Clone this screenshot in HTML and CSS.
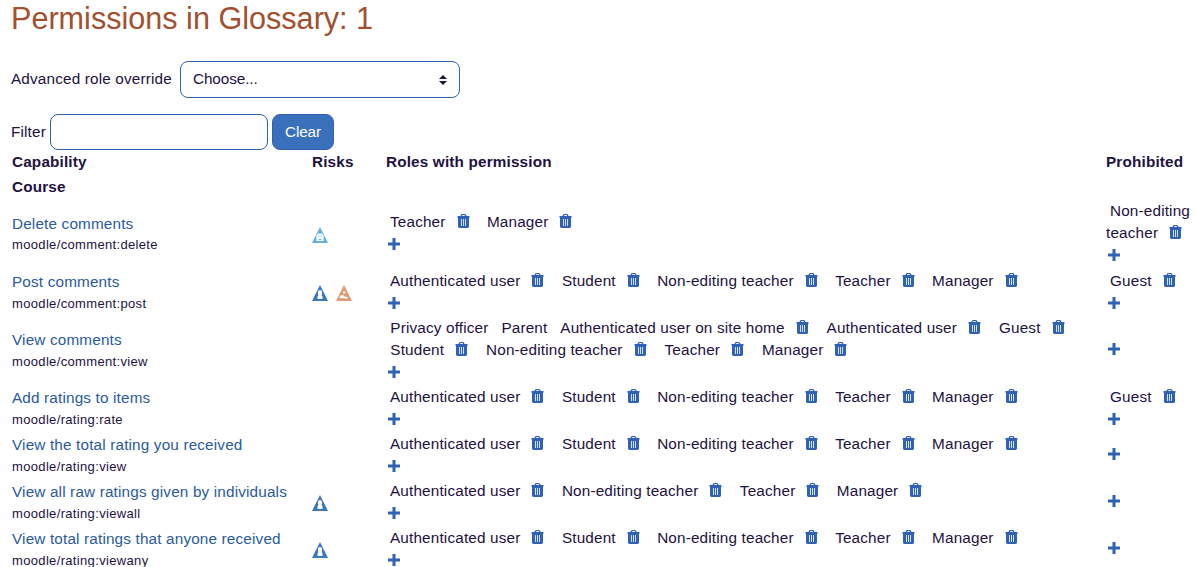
FILE: index.html
```
<!DOCTYPE html>
<html lang="en">
<head>
<meta charset="utf-8">
<title>Permissions in Glossary: 1</title>
<link rel="stylesheet" href="styles.css">
</head>
<body>
<svg class="sprite" width="0" height="0" aria-hidden="true">
  <symbol id="trash" viewBox="0 0 13 14"><path fill="currentColor" fill-rule="evenodd" d="M3.400 2 4.200.6Q4.400 0 5.200 0h2.600q.8 0 1 .6L9.600 2H12.500v1.800h-.5V12.600q0 1.400-1.400 1.400H2.400Q1 14 1 12.600V3.800H.5V2zM5 2h3L7.500 1.100h-2z"/><path stroke="#cfe0ee" d="M4.500 5v7M6.500 5v7M8.500 5v7"/></symbol>
  <symbol id="plus" viewBox="0 0 12 12"><path fill="currentColor" d="M4.500 0h3v4.500H12v3H7.500V12h-3V7.500H0v-3h4.500z"/></symbol>
  <symbol id="privacy" viewBox="0 0 16 16"><path fill="#3a76c2" d="M8 0l8 16H0z"/><path fill="#fff" d="M8 5c1.400 0 2.100 1.100 2.100 2.500 0 1.200-.3 2-.6 2.500L10.500 11.500V14h-5v-2.500L6.500 10c-.3-.5-.6-1.300-.6-2.500C5.900 6.100 6.600 5 8 5z"/></symbol>
  <symbol id="dataloss" viewBox="0 0 16 16"><path fill="#6aaee8" d="M8 0l8 16H0z"/><path fill="#fff" d="M4.500 8h1V6.500h5V8h1v6h-7z"/><path fill="none" stroke="#6aaee8" d="M6.200 9l1.300 1.200M9.800 9 8.500 10.200M6.500 12.400h3"/></symbol>
  <symbol id="spam" viewBox="0 0 16 16"><path fill="#e09a74" d="M8 0l8 16H0z"/><path fill="#fff" d="M7 6.500h2.500v2H7zM3.200 13l1.300-2.500L7 10l1.500 1.500 3 .5v1.500z"/></symbol>
</svg>
<h1>Permissions in Glossary: 1</h1>
<div class="override">
  <span>Advanced role override</span>
  <div class="select"><span>Choose...</span><svg class="caret" viewBox="0 0 8 10"><path fill="currentColor" d="M4 0l4 4H0zM4 10 0 6h8z"/></svg></div>
</div>
<div class="filter">
  <label for="filter">Filter</label><input id="filter" type="text"><button type="button">Clear</button>
</div>
<table>
  <colgroup><col class="c-cap"><col class="c-risk"><col class="c-roles"><col class="c-pro"></colgroup>
  <thead>
    <tr class="head"><th>Capability</th><th>Risks</th><th>Roles with permission</th><th>Prohibited</th></tr>
  </thead>
  <tbody>
    <tr class="group"><th colspan="4">Course</th></tr>
    <tr class="tall">
      <td><a>Delete comments</a><small>moodle/comment:delete</small></td>
      <td><svg class="risk"><use href="#dataloss"/></svg></td>
      <td><span class="role">Teacher<svg class="trash"><use href="#trash"/></svg></span> <span class="role">Manager<svg class="trash"><use href="#trash"/></svg></span><div class="add"><svg class="plus"><use href="#plus"/></svg></div></td>
      <td><span class="role">Non-editing teacher<svg class="trash"><use href="#trash"/></svg></span><div class="add"><svg class="plus"><use href="#plus"/></svg></div></td>
    </tr>
    <tr>
      <td><a>Post comments</a><small>moodle/comment:post</small></td>
      <td><svg class="risk"><use href="#privacy"/></svg><svg class="risk"><use href="#spam"/></svg></td>
      <td><span class="role">Authenticated user<svg class="trash"><use href="#trash"/></svg></span> <span class="role">Student<svg class="trash"><use href="#trash"/></svg></span> <span class="role">Non-editing teacher<svg class="trash"><use href="#trash"/></svg></span> <span class="role">Teacher<svg class="trash"><use href="#trash"/></svg></span> <span class="role">Manager<svg class="trash"><use href="#trash"/></svg></span><div class="add"><svg class="plus"><use href="#plus"/></svg></div></td>
      <td><span class="role">Guest<svg class="trash"><use href="#trash"/></svg></span><div class="add"><svg class="plus"><use href="#plus"/></svg></div></td>
    </tr>
    <tr class="three-line">
      <td><a>View comments</a><small>moodle/comment:view</small></td>
      <td></td>
      <td><span class="role">Privacy officer</span> <span class="role">Parent</span> <span class="role">Authenticated user on site home<svg class="trash"><use href="#trash"/></svg></span> <span class="role">Authenticated user<svg class="trash"><use href="#trash"/></svg></span> <span class="role">Guest<svg class="trash"><use href="#trash"/></svg></span><br><span class="role">Student<svg class="trash"><use href="#trash"/></svg></span> <span class="role">Non-editing teacher<svg class="trash"><use href="#trash"/></svg></span> <span class="role">Teacher<svg class="trash"><use href="#trash"/></svg></span> <span class="role">Manager<svg class="trash"><use href="#trash"/></svg></span><div class="add"><svg class="plus"><use href="#plus"/></svg></div></td>
      <td><div class="add only"><svg class="plus"><use href="#plus"/></svg></div></td>
    </tr>
    <tr>
      <td><a>Add ratings to items</a><small>moodle/rating:rate</small></td>
      <td></td>
      <td><span class="role">Authenticated user<svg class="trash"><use href="#trash"/></svg></span> <span class="role">Student<svg class="trash"><use href="#trash"/></svg></span> <span class="role">Non-editing teacher<svg class="trash"><use href="#trash"/></svg></span> <span class="role">Teacher<svg class="trash"><use href="#trash"/></svg></span> <span class="role">Manager<svg class="trash"><use href="#trash"/></svg></span><div class="add"><svg class="plus"><use href="#plus"/></svg></div></td>
      <td><span class="role">Guest<svg class="trash"><use href="#trash"/></svg></span><div class="add"><svg class="plus"><use href="#plus"/></svg></div></td>
    </tr>
    <tr>
      <td><a>View the total rating you received</a><small>moodle/rating:view</small></td>
      <td></td>
      <td><span class="role">Authenticated user<svg class="trash"><use href="#trash"/></svg></span> <span class="role">Student<svg class="trash"><use href="#trash"/></svg></span> <span class="role">Non-editing teacher<svg class="trash"><use href="#trash"/></svg></span> <span class="role">Teacher<svg class="trash"><use href="#trash"/></svg></span> <span class="role">Manager<svg class="trash"><use href="#trash"/></svg></span><div class="add"><svg class="plus"><use href="#plus"/></svg></div></td>
      <td><div class="add only"><svg class="plus"><use href="#plus"/></svg></div></td>
    </tr>
    <tr>
      <td><a>View all raw ratings given by individuals</a><small>moodle/rating:viewall</small></td>
      <td><svg class="risk"><use href="#privacy"/></svg></td>
      <td><span class="role">Authenticated user<svg class="trash"><use href="#trash"/></svg></span> <span class="role">Non-editing teacher<svg class="trash"><use href="#trash"/></svg></span> <span class="role">Teacher<svg class="trash"><use href="#trash"/></svg></span> <span class="role">Manager<svg class="trash"><use href="#trash"/></svg></span><div class="add"><svg class="plus"><use href="#plus"/></svg></div></td>
      <td><div class="add only"><svg class="plus"><use href="#plus"/></svg></div></td>
    </tr>
    <tr>
      <td><a>View total ratings that anyone received</a><small>moodle/rating:viewany</small></td>
      <td><svg class="risk"><use href="#privacy"/></svg></td>
      <td><span class="role">Authenticated user<svg class="trash"><use href="#trash"/></svg></span> <span class="role">Student<svg class="trash"><use href="#trash"/></svg></span> <span class="role">Non-editing teacher<svg class="trash"><use href="#trash"/></svg></span> <span class="role">Teacher<svg class="trash"><use href="#trash"/></svg></span> <span class="role">Manager<svg class="trash"><use href="#trash"/></svg></span><div class="add"><svg class="plus"><use href="#plus"/></svg></div></td>
      <td><div class="add only"><svg class="plus"><use href="#plus"/></svg></div></td>
    </tr>
  </tbody>
</table>
</body>
</html>
```
FILE: styles.css
```
* { box-sizing: border-box; }
body {
  margin: 0;
  padding-left: 11px;
  height: 567px;
  overflow: hidden;
  background: #fff;
  color: #23113f;
  font: 15.3px/22px "Liberation Sans", Arial, sans-serif;
  letter-spacing: 0.16px;
}
.sprite { display: block; }
h1 {
  margin: 0;
  height: 61px;
  color: #a2502e;
  font-size: 30.6px;
  line-height: 36px;
  font-weight: 400;
  letter-spacing: 0;
}
.override { display: flex; align-items: center; height: 37px; gap: 8px; }
.override > span { width: 161px; padding-bottom: 2px; white-space: nowrap; }
.select {
  display: flex;
  align-items: center;
  justify-content: space-between;
  width: 280px;
  height: 37px;
  padding: 0 12px;
  border: 1px solid #2f62b0;
  border-radius: 8px;
}
.select span { padding-bottom: 2px; letter-spacing: -0.1px; }
.caret { width: 8px; height: 10px; }
.filter { display: flex; align-items: center; height: 36px; margin-top: 16px; }
.filter label { width: 39px; }
.filter input {
  width: 218px;
  height: 36px;
  margin: 0 4px 0 0;
  border: 1px solid #2f62b0;
  border-radius: 8px;
  background: #fff;
}
.filter button {
  width: 62px;
  height: 36px;
  padding: 0;
  border: 1px solid #2f62b0;
  border-radius: 8px;
  background: #396fbb;
  color: #fff;
  font: inherit;
  letter-spacing: -0.1px;
}
table { width: 1185px; table-layout: fixed; border-collapse: collapse; }
.c-cap { width: 300px; }
.c-risk { width: 74px; }
.c-roles { width: 720px; }
.c-pro { width: 91px; }
th, td { padding: 0 0 0 1px; text-align: left; vertical-align: middle; }
tr { height: 47px; }
.head { height: 24.5px; }
.group { height: 24px; }
.tall { height: 70px; }
.three-line { height: 69px; }
td a { display: block; padding-bottom: 1px; color: #2a5a9e; }
.tall td a { padding: 1px 0 0; }
.tall td { padding-bottom: 1px; }
.tall td:nth-child(-n+2) { padding-bottom: 0; }
small { display: block; font-size: 13px; line-height: 20px; letter-spacing: 0.34px; }
.role { padding: 0 4px; }
.three-line .role { padding: 0 4.200px 0 4.300px; }
.trash { width: 13px; height: 14px; margin: 0 5px 0 11px; color: #2f62b5; vertical-align: -1px; }
.add { height: 22px; padding: 5px 0 0 2px; }
.only { padding-top: 4px; }
.plus { display: block; width: 12px; height: 12px; color: #2f62b5; }
.risk { width: 16px; height: 16px; margin-right: 8px; vertical-align: -4px; }
```
